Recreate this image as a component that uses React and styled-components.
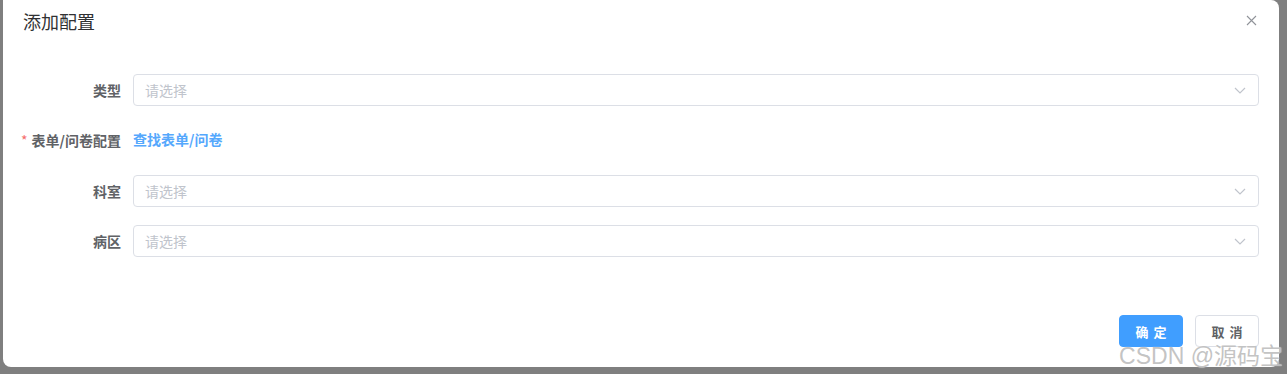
import React from "react";
import styled, { createGlobalStyle } from "styled-components";

const Global = createGlobalStyle`
  html, body { margin: 0; padding: 0; background: #7f7f7f; }
  body { font-family: "Noto Sans CJK SC", "Noto Sans", sans-serif; }
  * { box-sizing: border-box; }
`;

const Page = styled.div`
  position: relative;
  width: 1287px;
  height: 374px;
  padding-left: 3px;
  background: #7f7f7f;
  overflow: hidden;
`;

const Dialog = styled.div`
  width: 1276px;
  height: 367px;
  background: #fff;
  border-radius: 0 8px 8px 8px;
  display: flex;
  flex-direction: column;
`;

const Header = styled.div`
  display: flex;
  align-items: center;
  justify-content: space-between;
  padding: 9px 20px 0 20px;
  height: 33px;
`;

const Title = styled.span`
  font-size: 18px;
  line-height: 24px;
  color: #303133;
`;

const Close = styled.button`
  border: none;
  background: none;
  padding: 0;
  width: 14px;
  height: 14px;
  margin-right: 1px;
  margin-top: -2px;
  display: flex;
  align-items: center;
  justify-content: center;
  cursor: pointer;
`;

const Body = styled.div`
  padding: 41px 20px 0 20px;
  display: flex;
  flex-direction: column;
  gap: 18px;
`;

const Row = styled.div`
  display: flex;
  align-items: center;
  height: 32px;
  box-sizing: content-box;
  padding-bottom: ${(p) => (p.$tall ? 1 : 0)}px;
`;

const Label = styled.label`
  flex: 0 0 110px;
  min-width: 0;
  display: flex;
  justify-content: flex-end;
  padding-right: 12px;
  font-size: 14px;
  font-weight: 700;
  color: #606266;
  line-height: 32px;
  white-space: nowrap;
`;

const Star = styled.span`
  color: #f56c6c;
  margin-right: 4px;
  font-weight: 400;
`;

const Select = styled.div`
  flex: 1;
  height: 32px;
  border: 1px solid #dcdfe6;
  border-radius: 4px;
  display: flex;
  align-items: center;
  justify-content: space-between;
  padding: 0 12px 0 11px;
  font-size: 14px;
  color: #c0c4cc;
`;

const Link = styled.a`
  font-size: 14px;
  font-weight: 700;
  color: #55a8fd;
  text-decoration: none;
  line-height: 32px;
  margin-top: -2px;
`;

const Footer = styled.div`
  margin-top: auto;
  padding: 0 20px 20px;
  display: flex;
  justify-content: flex-end;
  gap: 12px;
`;

const Button = styled.button`
  width: 64px;
  height: 32px;
  border-radius: 4px;
  font-family: inherit;
  font-size: 13px;
  font-weight: 700;
  letter-spacing: 5px;
  text-indent: 5px;
  border: 1px solid ${(p) => (p.$primary ? "#409eff" : "#dcdfe6")};
  background: ${(p) => (p.$primary ? "#409eff" : "#fff")};
  color: ${(p) => (p.$primary ? "#fff" : "#606266")};
  cursor: pointer;
`;

const Watermark = styled.div`
  position: absolute;
  right: 4px;
  bottom: 4px;
  font-family: "Liberation Sans", "Noto Sans CJK SC", sans-serif;
  font-size: 23px;
  line-height: 27px;
  color: rgba(180, 180, 180, 0.8);
  text-shadow: 0 0 1px rgba(255, 255, 255, 0.9);
  pointer-events: none;
  white-space: nowrap;
`;

const Chevron = () => (
  <svg width="12" height="7" viewBox="0 0 12 7" fill="none">
    <path d="M1 1l5 5 5-5" stroke="#c0c4cc" strokeWidth="1.2" />
  </svg>
);

const fields = [
  { label: "科室" },
  { label: "病区" },
];

export default function App() {
  return (
    <>
      <Global />
      <Page>
        <Dialog>
          <Header>
            <Title>添加配置</Title>
            <Close aria-label="close">
              <svg width="11" height="11" viewBox="0 0 11 11">
                <path d="M1 1l9 9M10 1l-9 9" stroke="#909399" strokeWidth="1.1" />
              </svg>
            </Close>
          </Header>
          <Body>
            <Row>
              <Label>类型</Label>
              <Select>
                <span>请选择</span>
                <Chevron />
              </Select>
            </Row>
            <Row $tall>
              <Label>
                <Star>*</Star>表单/问卷配置
              </Label>
              <Link href="#">查找表单/问卷</Link>
            </Row>
            {fields.map((f) => (
              <Row key={f.label}>
                <Label>{f.label}</Label>
                <Select>
                  <span>请选择</span>
                  <Chevron />
                </Select>
              </Row>
            ))}
          </Body>
          <Footer>
            <Button $primary>确定</Button>
            <Button>取消</Button>
          </Footer>
        </Dialog>
        <Watermark>CSDN @源码宝</Watermark>
      </Page>
    </>
  );
}
